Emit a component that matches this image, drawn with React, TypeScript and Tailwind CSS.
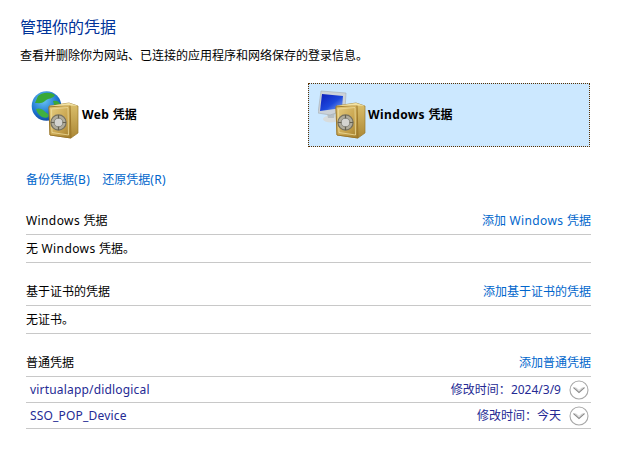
import type { ReactNode } from "react";

const font = "font-['Noto_Sans','Noto_Sans_CJK_SC',sans-serif]";

// latin runs render a bit wider in the original, so they get a little tracking
function Latin({ children }: { children: ReactNode }) {
  return <span className="tracking-[0.4px]">{children}</span>;
}

// gold safe shared by both credential tiles
function Safe({ id }: { id: string }) {
  return (
    <g transform="translate(0,-2)">
      <defs>
        <linearGradient id={`${id}-front`} x1="0" y1="0" x2="1" y2="1">
          <stop offset="0" stopColor="#e8d084" />
          <stop offset="0.6" stopColor="#c8a44e" />
          <stop offset="1" stopColor="#a07c2c" />
        </linearGradient>
        <linearGradient id={`${id}-side`} x1="0" y1="0" x2="0" y2="1">
          <stop offset="0" stopColor="#dcc06c" />
          <stop offset="1" stopColor="#ac8836" />
        </linearGradient>
      </defs>
      <path d="M18 18 L38 15 L47 18 L47 45 L40 50 L19 47 Z" fill={`url(#${id}-side)`} stroke="#98782c" strokeWidth="0.7" />
      <path d="M18 19 L39 17 L40 50 L19 47 Z" fill={`url(#${id}-front)`} stroke="#987428" strokeWidth="0.9" />
      <path d="M18 18 L38 15 L47 18 L39 17.5 Z" fill="#f2e2a4" />
      <path d="M20.5 21 L37 19.5 L37.5 47 L21 44.5 Z" fill="none" stroke="#eedc9c" strokeWidth="0.8" />
      <circle cx="27.5" cy="34.5" r="7.6" fill="#b0ac9c" stroke="#747060" strokeWidth="1.2" />
      <circle cx="27.5" cy="34.5" r="4.4" fill="#d4d4d0" stroke="#84847c" strokeWidth="1" />
      <path d="M27.5 27 V30.5 M27.5 38.5 V42 M20 34.5 H23.5 M31.5 34.5 H35" stroke="#646050" strokeWidth="1.2" />
    </g>
  );
}

function WebIcon() {
  return (
    <svg width="50" height="50" viewBox="0 0 50 50" className="shrink-0">
      <defs>
        <radialGradient id="globe" cx="0.4" cy="0.3" r="0.8">
          <stop offset="0" stopColor="#6cc4f4" />
          <stop offset="0.6" stopColor="#1c74d0" />
          <stop offset="1" stopColor="#0c3c94" />
        </radialGradient>
      </defs>
      <circle cx="15.5" cy="16" r="14.8" fill="url(#globe)" />
      <path d="M7 6 C12 2 19 2 24 5 C22 9 17 8 14 11 C11 14 7 13 4 13 Z" fill="#38a838" />
      <path d="M5 19 C10 17 13 21 17 24 C19 27 15 29 11 27 C8 25 6 23 5 19 Z" fill="#40b040" />
      <path d="M22 11 C26 10 29 12 30 16 L24 18 Z" fill="#3aa83a" />
      <Safe id="web" />
    </svg>
  );
}

function WindowsIcon() {
  return (
    <svg width="50" height="50" viewBox="0 0 50 50" className="shrink-0">
      <defs>
        <linearGradient id="screen" x1="0" y1="0" x2="1" y2="1">
          <stop offset="0" stopColor="#0c1cb8" />
          <stop offset="0.55" stopColor="#1c48dc" />
          <stop offset="1" stopColor="#90b0ee" />
        </linearGradient>
      </defs>
      <ellipse cx="13" cy="29" rx="8" ry="3.5" fill="#d8dcdc" />
      <path d="M9 23 L17 23 L16 28 L10 28 Z" fill="#b8c0c4" />
      <path d="M0 23 L3 1 L28 3 L27 20 L12 25 Z" fill="#ccd2d8" stroke="#a4acb4" strokeWidth="0.6" />
      <path d="M4 4 L25 6 L24 18 L2 21 Z" fill="url(#screen)" />
      <Safe id="win" />
    </svg>
  );
}

function ExpandIcon() {
  return (
    <svg width="20" height="20" viewBox="0 0 20 20" className="shrink-0" fill="none">
      <circle cx="10" cy="10" r="9" stroke="#a8a8a8" strokeWidth="1.1" />
      <path d="M4.5 7.5 L10 12.5 L15.5 7.5" stroke="#8a8a8a" strokeWidth="1.1" />
      <path d="M6.5 7.5 L10 10.5 L13.5 7.5" stroke="#c0c0c0" strokeWidth="0.8" />
    </svg>
  );
}

function Header({ title, action }: { title: ReactNode; action: ReactNode }) {
  return (
    <div className="flex h-[28px] items-center justify-between border-b border-[#c8c8c8]">
      <span className="text-black">{title}</span>
      <a className="text-[#0066cc]">{action}</a>
    </div>
  );
}

function Section({ title, action, empty }: { title: ReactNode; action: ReactNode; empty: ReactNode }) {
  return (
    <div className="mb-[15px]">
      <Header title={title} action={action} />
      <div className="flex h-[28px] items-center border-b border-[#c8c8c8] text-black">
        <span>{empty}</span>
      </div>
    </div>
  );
}

function CredRow({ name, date }: { name: string; date: string }) {
  return (
    <div className="flex h-[26px] items-center justify-between border-b border-[#c8c8c8] pl-[4px] pr-[2px] text-[#252a94]">
      <span className="tracking-[0.18px]">{name}</span>
      <div className="flex items-center gap-[8px]">
        <span>修改时间：{date}</span>
        <ExpandIcon />
      </div>
    </div>
  );
}

export default function App() {
  return (
    <div className={`${font} h-[469px] w-[626px] bg-white pl-[20px] pr-[35px] pt-[15px] text-[12px]`}>
      <h1 className="text-[16px] leading-[24px] text-[#003399]">管理你的凭据</h1>
      <p className="mt-[8px] leading-[18px] text-black">查看并删除你为网站、已连接的应用程序和网络保存的登录信息。</p>

      <div className="mt-[18px] flex gap-[18px]">
        <div className="flex h-[64px] w-[270px] items-center pl-[11px] font-bold text-black">
          <WebIcon />
          <span className="ml-[1px]">
            <Latin>Web </Latin>凭据
          </span>
        </div>
        <div className="flex h-[64px] w-[282px] items-center border border-dotted border-[#5a3000] bg-[#cce8ff] pl-[9px] font-bold text-black">
          <WindowsIcon />
          <span>
            <Latin>Windows </Latin>凭据
          </span>
        </div>
      </div>

      <div className="ml-[6px] mt-[24px] flex gap-[12px] leading-[18px] text-[#0066cc]">
        <a>
          备份凭据<Latin>(B)</Latin>
        </a>
        <a>
          还原凭据<Latin>(R)</Latin>
        </a>
      </div>

      <div className="ml-[6px] mt-[18px]">
        <Section
          title={
            <>
              <Latin>Windows </Latin>凭据
            </>
          }
          action={
            <>
              添加<Latin> Windows </Latin>凭据
            </>
          }
          empty={
            <>
              无<Latin> Windows </Latin>凭据。
            </>
          }
        />
        <Section title="基于证书的凭据" action="添加基于证书的凭据" empty="无证书。" />
        <Header title="普通凭据" action="添加普通凭据" />
        <CredRow name="virtualapp/didlogical" date="2024/3/9" />
        <CredRow name="SSO_POP_Device" date="今天" />
      </div>
    </div>
  );
}
